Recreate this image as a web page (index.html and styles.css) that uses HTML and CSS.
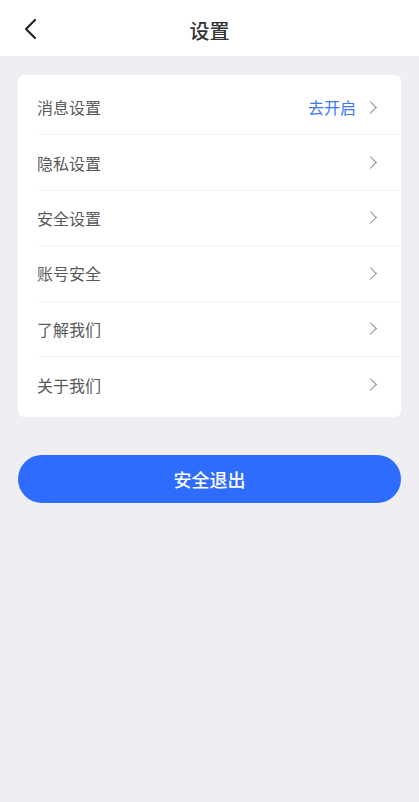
FILE: index.html
```html
<!DOCTYPE html>
<html lang="zh-CN">

<head>
    <meta charset="UTF-8">
    <meta name="viewport" content="width=device-width, initial-scale=1.0">
    <title>设置</title>
    <link rel="stylesheet" href="styles.css">
</head>

<body>
    <header class="navbar">
        <a class="back" href="#">
            <svg width="16" height="22" viewBox="0 0 16 22">
                <path d="M13 2 L4 11 L13 20" fill="none" stroke="#222" stroke-width="2.2" stroke-linecap="round" stroke-linejoin="round" />
            </svg>
        </a>
        <h1 class="title">设置</h1>
    </header>

    <main class="page">
        <ul class="card">
            <li class="row">
                <span class="label">消息设置</span>
                <span class="extra">去开启</span>
                <span class="arrow"></span>
            </li>
            <li class="row">
                <span class="label">隐私设置</span>
                <span class="arrow"></span>
            </li>
            <li class="row">
                <span class="label">安全设置</span>
                <span class="arrow"></span>
            </li>
            <li class="row">
                <span class="label">账号安全</span>
                <span class="arrow"></span>
            </li>
            <li class="row">
                <span class="label">了解我们</span>
                <span class="arrow"></span>
            </li>
            <li class="row">
                <span class="label">关于我们</span>
                <span class="arrow"></span>
            </li>
        </ul>

        <button class="logout">安全退出</button>
    </main>
</body>

</html>
```

FILE: styles.css
```css
* {
    margin: 0;
    padding: 0;
    box-sizing: border-box;
    font-family: 'Noto Sans CJK SC', 'Noto Sans', sans-serif;
}

body {
    background: #eeeef3;
    height: 100vh;
    overflow: hidden;
}

.navbar {
    height: 56px;
    background: #fff;
    display: flex;
    align-items: center;
    justify-content: center;
    position: relative;
}

.back {
    position: absolute;
    left: 22px;
    top: 18px;
    display: flex;
}

.title {
    font-size: 20px;
    font-weight: 500;
    color: #333;
    margin-top: 4px;
}

.page {
    padding: 19px 18px 0;
}

.card {
    list-style: none;
    background: #fff;
    border-radius: 6px;
    padding: 5px 0;
}

.row {
    height: 55.4px;
    margin-left: 19px;
    padding-right: 26px;
    display: flex;
    align-items: center;
    border-bottom: 1px solid #f3f3f5;
}

.row:last-child {
    border-bottom: none;
}

.label {
    flex: 1;
    font-size: 16px;
    color: #5a5a5a;
}

.extra {
    font-size: 16px;
    color: #3a78f6;
    margin-right: 10px;
}

.arrow {
    width: 9px;
    height: 9px;
    border-top: 1.6px solid #888;
    border-right: 1.6px solid #888;
    transform: rotate(45deg);
}

.logout {
    display: block;
    width: 100%;
    height: 48px;
    margin-top: 38px;
    border: none;
    border-radius: 24px;
    background: #2e6bff;
    color: #fff;
    font-size: 18px;
    font-weight: 500;
}
```
